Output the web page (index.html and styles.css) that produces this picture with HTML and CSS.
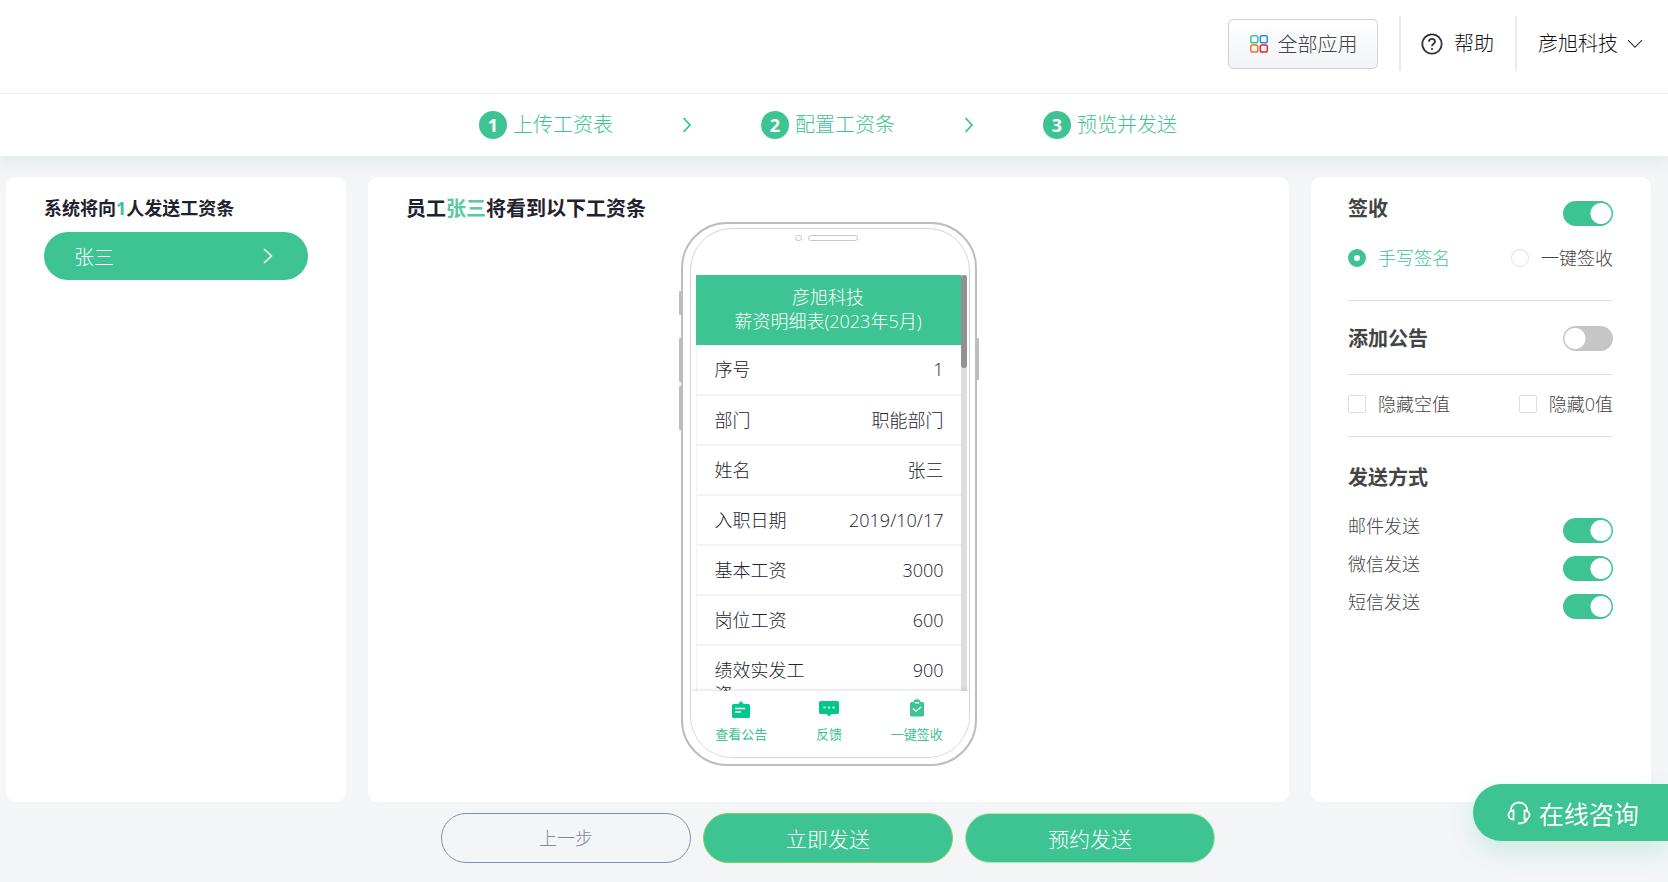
FILE: index.html
```html
<!DOCTYPE html>
<html lang="zh-CN">
<head>
    <meta charset="UTF-8">
    <meta name="viewport" content="width=device-width, initial-scale=1.0">
    <title>工资条 - 预览并发送</title>
    <link rel="stylesheet" href="styles.css">
</head>
<body>
    <header class="header">
        <button type="button" class="apps">
            <svg width="20" height="18" viewBox="0 0 20 18" fill="none" stroke-width="1.5">
                <rect x="1.8" y="0.8" width="7" height="7" rx="1.8" stroke="#35c99a"/>
                <rect x="11.3" y="0.8" width="7" height="7" rx="1.8" stroke="#2f86f6"/>
                <rect x="1.8" y="10" width="7" height="7" rx="1.8" stroke="#f5701f"/>
                <rect x="11.3" y="10" width="7" height="7" rx="1.8" stroke="#e8262d"/>
            </svg>
            全部应用
        </button>
        <a href="#" class="help">
            <svg width="22" height="22" viewBox="0 0 22 22" fill="none" stroke="#333" stroke-width="1.8">
                <circle cx="11" cy="11" r="9.7"/>
                <path d="M8 8.7c0-1.8 1.3-2.8 3-2.8s3 1.1 3 2.6c0 2.2-3 2.2-3 4.7"/>
                <circle cx="11" cy="16" r="1.1" fill="#333" stroke="none"/>
            </svg>
            帮助
        </a>
        <a href="#" class="company">
            彦旭科技
            <svg width="16" height="10" viewBox="0 0 16 10" fill="none" stroke="#333" stroke-width="1.1"><path d="M1 1.2l7 7 7-7"/></svg>
        </a>
    </header>

    <nav class="steps">
        <div class="step"><span class="num">1</span>上传工资表</div>
        <svg class="next" width="10" height="16" viewBox="0 0 10 16" fill="none" stroke="#3dc492" stroke-width="1.8"><path d="M1.5 1l6.5 7-6.5 7"/></svg>
        <div class="step"><span class="num">2</span>配置工资条</div>
        <svg class="next" width="10" height="16" viewBox="0 0 10 16" fill="none" stroke="#3dc492" stroke-width="1.8"><path d="M1.5 1l6.5 7-6.5 7"/></svg>
        <div class="step"><span class="num">3</span>预览并发送</div>
    </nav>

    <main class="main">
        <section class="card people">
            <h2>系统将向<em>1</em>人发送工资条</h2>
            <button type="button" class="person">
                张三
                <svg width="10" height="16" viewBox="0 0 10 16" fill="none" stroke="#fff" stroke-width="1.6"><path d="M1 1l7.5 7L1 15"/></svg>
            </button>
        </section>

        <section class="card preview">
            <h1>员工<em>张三</em>将看到以下工资条</h1>
            <div class="phone">
                <i class="key mute"></i>
                <i class="key vol-up"></i>
                <i class="key vol-down"></i>
                <i class="key power"></i>
                <div class="phone-in">
                    <div class="speaker"><i class="cam"></i><i class="ear"></i></div>
                    <div class="screen">
                        <div class="slip">
                            <div class="slip-title">彦旭科技<br>薪资明细表(2023年5月)</div>
                            <table>
                                <tr><th>序号</th><td>1</td></tr>
                                <tr><th>部门</th><td>职能部门</td></tr>
                                <tr><th>姓名</th><td>张三</td></tr>
                                <tr><th>入职日期</th><td>2019/10/17</td></tr>
                                <tr><th>基本工资</th><td>3000</td></tr>
                                <tr><th>岗位工资</th><td>600</td></tr>
                                <tr><th>绩效实发工资</th><td>900</td></tr>
                            </table>
                        </div>
                        <div class="track"><div class="thumb"></div></div>
                    </div>
                    <div class="tabs">
                        <a href="#">
                            <svg width="20" height="20" viewBox="0 0 20 20">
                                <path d="M2.5 5h4.700L10 2l2.800 3h4.700a1.500 1.500 0 0 1 1.500 1.500v11a1.500 1.500 0 0 1-1.500 1.500h-15A1.500 1.500 0 0 1 1 17.500v-11A1.500 1.500 0 0 1 2.500 5z" fill="#05c78c"/>
                                <path d="M4 9.500h10M4 13h6" stroke="#fff" stroke-width="1.300"/>
                            </svg>
                            查看公告
                        </a>
                        <a href="#">
                            <svg width="20" height="20" viewBox="0 0 20 20">
                                <path d="M1.500 2h17A1.500 1.500 0 0 1 20 3.500v10a1.500 1.500 0 0 1-1.500 1.500h-6L10 17.500 7.500 15h-6A1.500 1.500 0 0 1 0 13.500v-10A1.500 1.500 0 0 1 1.500 2z" fill="#05c78c"/>
                                <g fill="#fff"><circle cx="5.500" cy="8.500" r="1.100"/><circle cx="10" cy="8.500" r="1.100"/><circle cx="14.500" cy="8.500" r="1.100"/></g>
                            </svg>
                            反馈
                        </a>
                        <a href="#">
                            <svg width="20" height="20" viewBox="0 0 20 20">
                                <path d="M4.500 3H6.500a3.500 2.800 0 0 1 7 0h2A1.500 1.500 0 0 1 17 4.500v11.500a1.500 1.500 0 0 1-1.500 1.500h-11A1.500 1.500 0 0 1 3 16V4.500A1.500 1.500 0 0 1 4.500 3z" fill="#3dc492"/>
                                <path d="M8.500 3.800h3" stroke="#fff" stroke-width="1.600" stroke-linecap="round"/>
                                <path d="M5.800 9.500l3.200 2.800 5.200-4.300" stroke="#fff" stroke-width="1.200" fill="none"/>
                            </svg>
                            一键签收
                        </a>
                    </div>
                </div>
            </div>
        </section>

        <section class="card setting">
            <div class="row head">
                <h3><label for="sign">签收</label></h3>
                <input type="checkbox" class="switch" id="sign" checked>
            </div>
            <div class="row sign-type">
                <label class="on"><input type="radio" name="signType" checked>手写签名</label>
                <label><input type="radio" name="signType">一键签收</label>
            </div>
            <div class="row notice">
                <h3><label for="notice">添加公告</label></h3>
                <input type="checkbox" class="switch" id="notice">
            </div>
            <div class="row hide">
                <label><input type="checkbox" class="box">隐藏空值</label>
                <label><input type="checkbox" class="box">隐藏0值</label>
            </div>
            <h3 class="way-title">发送方式</h3>
            <div class="row way">
                <label for="mail">邮件发送</label>
                <input type="checkbox" class="switch" id="mail" checked>
            </div>
            <div class="row way">
                <label for="wechat">微信发送</label>
                <input type="checkbox" class="switch" id="wechat" checked>
            </div>
            <div class="row way">
                <label for="sms">短信发送</label>
                <input type="checkbox" class="switch" id="sms" checked>
            </div>
        </section>
    </main>

    <footer class="actions">
        <button type="button" class="btn back">上一步</button>
        <button type="button" class="btn send">立即发送</button>
        <button type="button" class="btn later">预约发送</button>
    </footer>

    <button type="button" class="service">
        <svg width="24" height="24" viewBox="0 0 24 24" fill="none" stroke="#fff" stroke-width="1.8">
            <path d="M3.500 10.500C3.500 5 7 1.500 12 1.500s8.500 3.500 8.500 9"/>
            <path d="M6.500 9.500v9C3.500 18.500 1.500 16.500 1.500 14s2-4.500 5-4.500zM17.500 9.500v9c3 0 5-2 5-4.500s-2-4.500-5-4.500z"/>
            <path d="M20.500 17.500c-1 3.500-4 5-9.500 5"/>
        </svg>
        在线咨询
    </button>
</body>
</html>
```

FILE: styles.css
```css
*{
    box-sizing: border-box;
}

body{
    margin: 0;
    min-height: 100vh;
    display: flex;
    flex-direction: column;
    background-color: #f3f5f7;
    color: #22222e;
    font-family: "Open Sans", "Noto Sans CJK SC", sans-serif;
    font-weight: 300;
    font-size: 18px;
    line-height: 24px;
}

h1, h2, h3{
    margin: 0;
    font-weight: 700;
}

em{
    font-style: normal;
    color: #3dc492;
}

a{
    color: inherit;
    text-decoration: none;
}

button{
    font-family: inherit;
    font-weight: inherit;
    padding: 0;
    cursor: pointer;
}

svg{
    flex: none;
}

/* header */
.header{
    position: relative;
    z-index: 1;
    height: 94px;
    padding: 0 25px 6px 0;
    display: flex;
    align-items: center;
    justify-content: flex-end;
    background-color: #fff;
    border-bottom: 1px solid #ebedee;
    font-size: 20px;
    color: #111;
}

.apps{
    width: 150px;
    height: 50px;
    margin-right: 21px;
    display: flex;
    align-items: center;
    justify-content: center;
    gap: 9px;
    border: 1px solid #cfd1dc;
    border-radius: 5px;
    background: linear-gradient(#fff, #f1f3f7);
    font-size: 20px;
    color: #444;
}

.help,
.company{
    height: 55px;
    display: flex;
    align-items: center;
    border-left: 2px solid #ebebee;
}

.help{
    padding: 0 21px 0 20px;
    gap: 11px;
}

.company{
    padding-left: 21px;
    gap: 9px;
}

/* steps */
.steps{
    height: 62px;
    padding-right: 12px;
    display: flex;
    align-items: center;
    justify-content: center;
    background-color: #fff;
    box-shadow: 0 2px 20px rgba(180, 200, 210, 0.4);
    font-size: 20px;
    color: #3dc492;
}

.step{
    display: flex;
    align-items: center;
    gap: 6px;
}

.num{
    width: 28px;
    height: 28px;
    border-radius: 50%;
    background-color: #3dc492;
    color: #fff;
    font-size: 18px;
    font-weight: 700;
    line-height: 28px;
    text-align: center;
}

.next{
    margin: 0 69px;
}

/* cards */
.main{
    flex: 1;
    margin: 21px 17px 0 6px;
    display: flex;
    gap: 22px;
}

.card{
    background-color: #fff;
    border-radius: 10px;
}

.people{
    flex: none;
    width: 340px;
    padding: 19px 38px;
}

.people h2{
    font-size: 18px;
}

.person{
    width: 100%;
    height: 48px;
    margin-top: 12px;
    padding: 0 35px 0 30px;
    display: flex;
    align-items: center;
    justify-content: space-between;
    border: 0;
    border-radius: 24px;
    background-color: #3dc492;
    color: #fff;
    font-size: 20px;
}

.preview{
    flex: 1;
    padding: 20px 38px 36px;
}

.preview h1{
    font-size: 20px;
}

.preview em{
    color: #58c9a0;
}

/* phone */
.phone{
    position: relative;
    width: 296px;
    height: 544px;
    margin: 1px auto 0;
    padding: 4px 5px 6px 7px;
    border: 2px solid #bdbdbd;
    border-radius: 46px;
}

.phone-in{
    height: 100%;
    border: 1px solid #d5d5d5;
    border-radius: 42px;
    overflow: hidden;
}

.key{
    position: absolute;
    left: -4px;
    width: 3px;
    border-radius: 1px;
    background-color: #bdbdbd;
}

.mute{
    top: 67px;
    height: 24px;
}

.vol-up{
    top: 114px;
    height: 44px;
}

.vol-down{
    top: 162px;
    height: 44px;
}

.power{
    left: auto;
    right: -4px;
    top: 114px;
    height: 42px;
}

.speaker{
    height: 46px;
    padding: 6px 6px 0 0;
    display: flex;
    justify-content: center;
    gap: 6px;
}

.speaker i{
    height: 6px;
    border: 1px solid #c8c8c8;
    border-radius: 3px;
}

.cam{
    width: 7px;
}

.ear{
    width: 50px;
}

.screen{
    height: 416px;
    margin: 0 2px 0 5px;
    display: flex;
    overflow: hidden;
}

.slip{
    flex: 1;
}

.slip-title{
    height: 70px;
    padding-top: 10px;
    background-color: #3dc492;
    color: #fff;
    text-align: center;
}

.slip table{
    width: 100%;
    table-layout: fixed;
    border-collapse: collapse;
    border-left: 1px solid #f3f3f4;
}

.slip tr{
    height: 50px;
    border-bottom: 2px solid #f3f3f4;
    vertical-align: top;
}

.slip th,
.slip td{
    padding: 12px 17px 12px 18px;
    font-weight: 300;
    text-align: left;
}

.slip th{
    width: 112px;
    padding-right: 0;
}

.slip td{
    text-align: right;
}

.track{
    width: 6px;
    background-color: #dedede;
}

.thumb{
    height: 93px;
    border-radius: 3px;
    background-color: #929090;
}

.tabs{
    position: relative;
    height: 70px;
    padding: 8px 8px 0 7px;
    display: flex;
    background-color: #fff;
    box-shadow: 0 -1px 4px rgba(0, 0, 0, 0.12);
    font-size: 13px;
    font-weight: 400;
    color: #3dc492;
}

.tabs a{
    flex: 1;
    display: flex;
    flex-direction: column;
    align-items: center;
    gap: 3px;
}

/* settings */
.setting{
    flex: none;
    width: 340px;
    padding: 20px 38px 20px 37px;
    color: #444;
}

.setting h3{
    font-size: 20px;
    color: #444;
}

.row{
    display: flex;
    align-items: center;
    justify-content: space-between;
}

.row label{
    display: flex;
    align-items: center;
    gap: 12px;
}

.row input{
    appearance: none;
    flex: none;
    margin: 0;
    width: 18px;
    height: 18px;
    border: 1px solid #dcdfe6;
    background-color: #fff;
}

.row input.box{
    border-radius: 2px;
}

.row input[type="radio"]{
    border-radius: 50%;
}

.row input[type="radio"]:checked{
    border: 6px solid #3dc492;
}

.row input.switch{
    width: 50px;
    height: 25px;
    border: 0;
    border-radius: 13px;
    background: radial-gradient(circle at 12px 50%, #fff 10px, #c6c6c6 11px);
}

.row input.switch:checked{
    background: radial-gradient(circle at 38px 50%, #fff 10px, #3dc492 11px);
}

.sign-type,
.notice,
.hide{
    border-bottom: 1px solid #dfdfe0;
}

.head{
    height: 32px;
}

.head h3{
    padding-bottom: 8px;
}

.sign-type{
    height: 72px;
    padding-bottom: 13px;
}

.sign-type .on{
    color: #3dc492;
}

.notice{
    height: 74px;
    padding-top: 2px;
}

.hide{
    height: 62px;
    padding-bottom: 3px;
}

.way-title{
    margin: 29px 0 21px;
}

.way{
    height: 38px;
}

.way label{
    padding-bottom: 8px;
}

/* bottom buttons */
.actions{
    padding: 11px 12px 19px 0;
    display: flex;
    justify-content: center;
    gap: 12px;
}

.btn{
    width: 250px;
    height: 50px;
    border: 1px solid #3dc492;
    border-radius: 25px;
    background-color: #3dc492;
    color: #fff;
    font-size: 21px;
}

.back{
    padding-bottom: 3px;
    border-color: #8492a6;
    background-color: transparent;
    color: #7d8b99;
    font-size: 18px;
}

.send{
    border-color: #85ce61;
}

.later{
    border-color: #b3e6a8;
}

.service{
    position: fixed;
    right: 0;
    bottom: 41px;
    width: 195px;
    height: 57px;
    padding-left: 34px;
    display: flex;
    align-items: center;
    gap: 8px;
    border: 0;
    border-radius: 29px 0 0 29px;
    background-color: #3dc492;
    box-shadow: 0 10px 24px rgba(61, 196, 146, 0.2);
    color: #fff;
    font-size: 25px;
    font-weight: 400;
}
```
